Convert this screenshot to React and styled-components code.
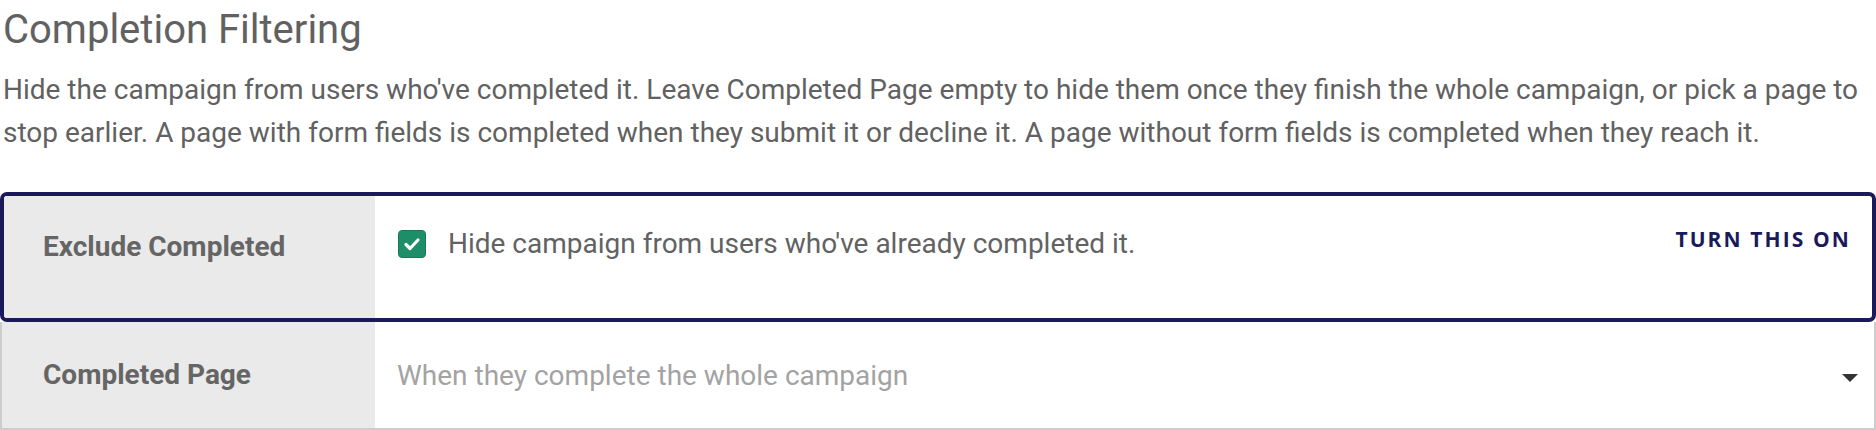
import styled, { createGlobalStyle } from 'styled-components';

const GlobalStyle = createGlobalStyle`
  body {
    margin: 0;
    background: #fff;
    font-family: Roboto, "Liberation Sans", sans-serif;
  }
  * {
    box-sizing: border-box;
  }
`;

const Section = styled.section`
  width: 1876px;
`;

const Intro = styled.div`
  padding: 0 3px;
  color: #616161;
`;

const Title = styled.h2`
  margin: 0;
  font-size: 40px;
  font-weight: 400;
  line-height: 60px;
`;

const Description = styled.p`
  margin: 8px 0 0;
  font-size: 28px;
  line-height: 43px;
`;

const Table = styled.div`
  margin-top: 38px;
  display: flex;
  flex-direction: column;
`;

const Row = styled.div`
  display: flex;
  min-height: ${(p) => (p.$active ? '130px' : '108px')};
  border: ${(p) => (p.$active ? '4px solid #1a195b' : '2px solid #cdcdcd')};
  border-top-width: ${(p) => (p.$active ? '4px' : '0')};
  border-radius: ${(p) => (p.$active ? '7px' : '0')};
  overflow: hidden;
`;

const Label = styled.div`
  flex: 0 0 ${(p) => (p.$active ? '371px' : '373px')};
  background: #eaeaea;
  padding: ${(p) => (p.$active ? '34px' : '36px')} 40px 0 ${(p) => (p.$active ? '39px' : '41px')};
  font-size: 28px;
  font-weight: 700;
  line-height: 33px;
  color: #656565;
`;

const Value = styled.div`
  flex: 1;
  display: flex;
  justify-content: space-between;
  align-items: ${(p) => (p.$center ? 'center' : 'flex-start')};
  padding: ${(p) => (p.$center ? '0 16px 0 22px' : '31px 21px 0 23px')};
`;

const CheckRow = styled.label`
  display: flex;
  align-items: center;
  gap: 22px;
  height: 33px;
  font-size: 28px;
  color: #626262;
  cursor: pointer;
`;

const CheckBox = styled.span`
  width: 28px;
  height: 28px;
  border-radius: 4px;
  background: #1e8e69;
  border: 1px solid #197a5a;
  display: inline-flex;
  align-items: center;
  justify-content: center;
`;

const Action = styled.button`
  margin-top: -3px;
  border: none;
  background: none;
  padding: 0;
  font-family: "Open Sans", "Liberation Sans", sans-serif;
  font-size: 21px;
  font-weight: 700;
  line-height: 30px;
  letter-spacing: 2.1px;
  color: #1a195b;
  cursor: pointer;
`;

const Select = styled.div`
  flex: 1;
  display: flex;
  align-items: center;
  justify-content: space-between;
  font-size: 28px;
  color: #a3a3a3;
`;

const Caret = styled.svg`
  margin-top: 6px;
`;

function App() {
  return (
    <>
      <GlobalStyle />
      <Section>
        <Intro>
          <Title>Completion Filtering</Title>
          <Description>
            Hide the campaign from users who've completed it. Leave Completed Page empty to hide them once they
            finish the whole campaign, or pick a page to stop earlier. A page with form fields is completed when
            they submit it or decline it. A page without form fields is completed when they reach it.
          </Description>
        </Intro>
        <Table>
          <Row $active>
            <Label $active>Exclude Completed</Label>
            <Value>
              <CheckRow>
                <CheckBox>
                  <svg width="22" height="22" viewBox="0 0 22 22">
                    <polyline
                      points="5,11.5 9,15.5 17,7"
                      fill="none"
                      stroke="#fff"
                      strokeWidth="3.2"
                      strokeLinecap="round"
                      strokeLinejoin="round"
                    />
                  </svg>
                </CheckBox>
                Hide campaign from users who've already completed it.
              </CheckRow>
              <Action>TURN THIS ON</Action>
            </Value>
          </Row>
          <Row>
            <Label>Completed Page</Label>
            <Value $center>
              <Select>
                When they complete the whole campaign
                <Caret width="16" height="8" viewBox="0 0 16 8">
                  <polygon points="0,0 16,0 8,8" fill="#333" />
                </Caret>
              </Select>
            </Value>
          </Row>
        </Table>
      </Section>
    </>
  );
}

export default App;
